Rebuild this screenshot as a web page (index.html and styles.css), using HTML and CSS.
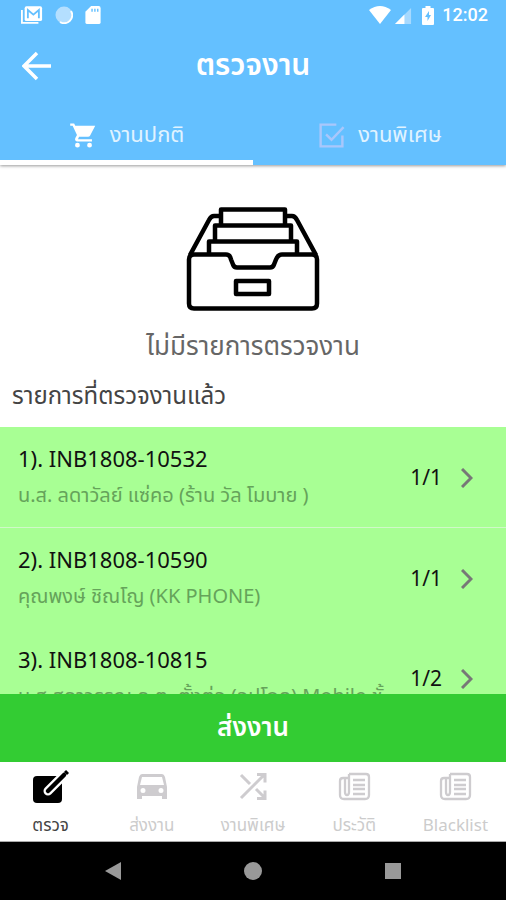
FILE: index.html
```html
<!DOCTYPE html>
<html lang="th">
<head>
<meta charset="utf-8">
<meta name="viewport" content="width=device-width, initial-scale=1">
<title>ตรวจงาน</title>
<link rel="stylesheet" href="styles.css">
</head>
<body>
<header class="top">
  <div class="status">
    <div class="status-group">
      <svg class="status-icon mail" viewBox="0 0 24 20"><path d="M1 4v14h18" fill="none" stroke="#fff" stroke-width="2"/><rect x="4" y="0" width="19" height="16" rx="2" fill="#fff"/><path d="M7.500 13V4l6 5 6-5v9" fill="none" stroke="#64c0ff" stroke-width="2"/></svg>
      <svg class="status-icon sync" viewBox="0 0 18 18"><circle cx="9" cy="9" r="8.500" fill="#b4dfff"/><path d="M16 5a8 8 0 0 1-11 11" fill="none" stroke="#fff" stroke-width="2"/></svg>
      <svg class="status-icon card" viewBox="0 0 16 20"><path d="M6 0h8a2 2 0 0 1 2 2v15a2 2 0 0 1-2 2H2a2 2 0 0 1-2-2V6z" fill="#fff"/><path d="M7 3v3M10 3v3M13 3v3" stroke="#64c0ff" stroke-width="1.500"/></svg>
    </div>
    <div class="status-group right">
      <svg class="status-icon wifi" viewBox="0 0 22 18"><path d="M0 4Q11-4 22 4L11 18z" fill="#fff"/></svg>
      <svg class="status-icon signal" viewBox="0 0 18 18"><path d="M17 1v17H0z" fill="#a6d9ff"/><path d="M10 8v10H0z" fill="#fff"/></svg>
      <svg class="status-icon battery" viewBox="0 0 12 19"><path d="M3.500 2V0h5v2H11a1 1 0 0 1 1 1v15a1 1 0 0 1-1 1H1a1 1 0 0 1-1-1V3a1 1 0 0 1 1-1z" fill="#fff"/><path d="M7 5L3 11h2.500v4L9 9H7z" fill="#64c0ff"/></svg>
      <time class="clock">12:02</time>
    </div>
  </div>
  <div class="toolbar">
    <button class="back" aria-label="กลับ"><svg viewBox="0 0 30 30"><path d="M15 2L2 15l13 13M2 15h27" fill="none" stroke="#fff" stroke-width="3.500"/></svg></button>
    <h1>ตรวจงาน</h1>
  </div>
  <nav class="tabs">
    <button class="tab active"><svg viewBox="0 0 24 24"><path fill="#fff" d="M7 18a2 2 0 1 0 0 4 2 2 0 0 0 0-4zM1 2v2h2l3.600 7.590-1.350 2.450C4.500 15.400 5.500 17 7 17h12v-2H7.420l.9-2h7.450a2 2 0 0 0 1.750-1.030L21.700 4H5.210L4.270 2zm16 16a2 2 0 1 0 0 4 2 2 0 0 0 0-4z"/></svg><span>งานปกติ</span></button>
    <button class="tab"><svg viewBox="0 0 24 24"><path d="M16 3H3v18h18V12M7.500 11l4.500 4.500L22 5" fill="none" stroke="#a9c7fb" stroke-width="2"/></svg><span>งานพิเศษ</span></button>
  </nav>
</header>
<main class="content">
  <section class="empty">
    <svg viewBox="0 0 134 104"><g fill="none" stroke="#000" stroke-width="4.500" stroke-linejoin="round"><path d="M35 17V2.500h64V17M35 9h-7q-3 0-5 4L4 48M99 9h7q3 0 5 4l19 35M29 34V18.500h76V34M23 47V34.500h88V47"/><path d="M8 47.500h32q4 0 5 5l2 5q1 3 4 3h33q3 0 4-3l2-5q2-5 6-5h30q5 0 5 5v44q0 5-5 5H8q-5 0-5-5v-44q0-5 5-5z"/><rect x="50" y="74" width="33" height="13"/></g></svg>
    <p>ไม่มีรายการตรวจงาน</p>
  </section>
  <h2>รายการที่ตรวจงานแล้ว</h2>
  <ul class="jobs">
    <li><a href="#job-1"><span class="job"><strong>1). INB1808-10532</strong><small>น.ส. ลดาวัลย์ แซ่คอ (ร้าน วัล โมบาย )</small></span><span class="count">1/1</span><svg viewBox="0 0 12 20"><path d="M1 1l9 9-9 9"/></svg></a></li>
    <li><a href="#job-2"><span class="job"><strong>2). INB1808-10590</strong><small>คุณพงษ์ ชิณโญ (KK PHONE)</small></span><span class="count">1/1</span><svg viewBox="0 0 12 20"><path d="M1 1l9 9-9 9"/></svg></a></li>
    <li><a href="#job-3"><span class="job"><strong>3). INB1808-10815</strong><small>น.ส.สดาวรรณ ด.ต. ตั้งต่อ (อุปโภค) Mobile ชั้</small></span><span class="count">1/2</span><svg viewBox="0 0 12 20"><path d="M1 1l9 9-9 9"/></svg></a></li>
  </ul>
</main>
<button class="submit">ส่งงาน</button>
<nav class="bottom">
  <a class="active" href="#check"><svg viewBox="0 0 36 36"><rect y="7" width="29" height="27" rx="4" fill="#000"/><path d="M15 22L32 5" stroke="#fff" stroke-width="9" stroke-linecap="round"/><path d="M15 22L31 6" stroke="#000" stroke-width="4.500" stroke-linecap="round"/><path d="M32 2l3 3" stroke="#000" stroke-width="3"/></svg><span>ตรวจ</span></a>
  <a href="#send"><svg viewBox="0 0 36 36"><path fill="#cecccf" fill-rule="evenodd" d="M8 5h20q2 0 3 3l2 10v12h-5v-3H8v3H3V18L5 8q1-3 3-3zm0 3L6 16h24l-2-8zM9 19a2.500 2.500 0 1 0 0 5 2.500 2.500 0 0 0 0-5zm18 0a2.500 2.500 0 1 0 0 5 2.500 2.500 0 0 0 0-5z"/></svg><span>ส่งงาน</span></a>
  <a href="#special"><svg viewBox="0 0 36 36"><path d="M6 6l9 9M6 29L29 6M21 20l8 8M22 5.500h8v8M22 29.500h8v-8" fill="none" stroke="#cecccf" stroke-width="3"/></svg><span>งานพิเศษ</span></a>
  <a href="#history"><svg viewBox="0 0 36 36"><g fill="none" stroke="#cecccf" stroke-width="2.300"><path d="M13 5h17q3 0 3 3v18q0 4-4 4H8q-4 0-4-4V12q0-3 3-3h6M13 5v18q0 3-2 3t-2-3V9"/><path d="M17 11h12M17 16h12M17 20h12M17 25h12"/></g></svg><span>ประวัติ</span></a>
  <a href="#blacklist"><svg viewBox="0 0 36 36"><g fill="none" stroke="#cecccf" stroke-width="2.300"><path d="M13 5h17q3 0 3 3v18q0 4-4 4H8q-4 0-4-4V12q0-3 3-3h6M13 5v18q0 3-2 3t-2-3V9"/><path d="M17 11h12M17 16h12M17 20h12M17 25h12"/></g></svg><span>Blacklist</span></a>
</nav>
<div class="system">
  <button aria-label="ย้อนกลับ"><svg viewBox="0 0 18 18"><path d="M17 0v18L1 9z"/></svg></button>
  <button aria-label="หน้าหลัก"><svg viewBox="0 0 18 18"><circle cx="9" cy="9" r="9"/></svg></button>
  <button aria-label="แอปล่าสุด"><svg viewBox="0 0 18 18"><path d="M1 1h16v16H1z"/></svg></button>
</div>
</body>
</html>
```
FILE: styles.css
```css
* { box-sizing: border-box; }
body {
  margin: 0;
  height: 100vh;
  display: flex;
  flex-direction: column;
  background: #fff;
  font-family: "Noto Sans Thai", "Prompt", "Open Sans", "Noto Sans", sans-serif;
  color: #111;
}
button { border: 0; padding: 0; background: none; font: inherit; color: inherit; }
a { color: inherit; text-decoration: none; }
svg { display: block; flex: none; }
h1, h2, p, ul { margin: 0; padding: 0; font-weight: 400; }

.top { background: #64c0ff; color: #fff; box-shadow: 0 1px 3px #999; position: relative; }
.status { display: flex; justify-content: space-between; height: 30px; padding: 0 18px 0 21px; align-items: center; }
.status-group { display: flex; align-items: center; gap: 12px; }
.status-group.right { gap: 4px; }
.mail { width: 22px; height: 19px; }
.sync { width: 18px; height: 18px; }
.card { width: 16px; height: 19px; }
.wifi { width: 22px; height: 18px; }
.signal { width: 17px; height: 17px; }
.battery { width: 12px; height: 19px; margin-left: 6px; }
.clock { font: 500 18px/20px Roboto, sans-serif; margin-left: 4px; }
.toolbar { display: grid; grid-template-columns: 52px 1fr 52px; align-items: center; height: 72px; }
.back { padding-left: 22px; }
.back svg { width: 30px; height: 30px; }
h1 { font-size: 30px; line-height: 36px; font-weight: 600; text-align: center; }
.tabs { display: grid; grid-template-columns: 1fr 1fr; }
.tab { display: flex; align-items: center; justify-content: center; gap: 12px; height: 63px; padding-top: 8px; border-bottom: 5px solid transparent; font-size: 22px; color: #e0f3ff; }
.tab.active { border-color: #fff; }
.tab svg { width: 29px; height: 29px; }

.content { flex: 1; min-height: 0; overflow: hidden; }
.empty { display: flex; flex-direction: column; align-items: center; padding-top: 42px; }
.empty svg { width: 134px; height: 104px; }
.empty p { margin-top: 16px; font-size: 26px; line-height: 40px; color: #666; }
h2 { padding: 10px 12px; font-size: 24px; line-height: 40px; color: #444; }
.jobs { list-style: none; background: #a8ff94; }
.jobs a { display: flex; align-items: center; height: 100px; padding: 2px 33px 0 18px; }
.jobs li:first-child { border-bottom: 1px solid #d0f8c8; }
.job { flex: 1; min-width: 0; display: flex; flex-direction: column; }
.job strong { font-size: 22px; line-height: 36px; font-weight: 400; }
.job small { font-size: 20px; line-height: 34px; color: #65a35a; white-space: nowrap; }
.count { font-size: 21px; margin-right: 19px; }
.jobs svg { width: 12px; height: 20px; fill: none; stroke: #777; stroke-width: 3; }

.submit { height: 68px; background: #33cc33; color: #fff; font-size: 26px; font-weight: 600; }
.bottom { display: grid; grid-template-columns: repeat(5, 1fr); height: 80px; padding-top: 7px; border-bottom: 1px solid #aaa; background: #fff; }
.bottom a { display: flex; flex-direction: column; align-items: center; font-size: 17px; line-height: 26px; gap: 8px; color: #ccc; }
.bottom .active { color: #444; }
.bottom svg { width: 36px; height: 36px; }
.system { display: flex; justify-content: center; align-items: center; gap: 122px; height: 58px; background: #000; }
.system svg { width: 18px; height: 18px; fill: #999; }
```
